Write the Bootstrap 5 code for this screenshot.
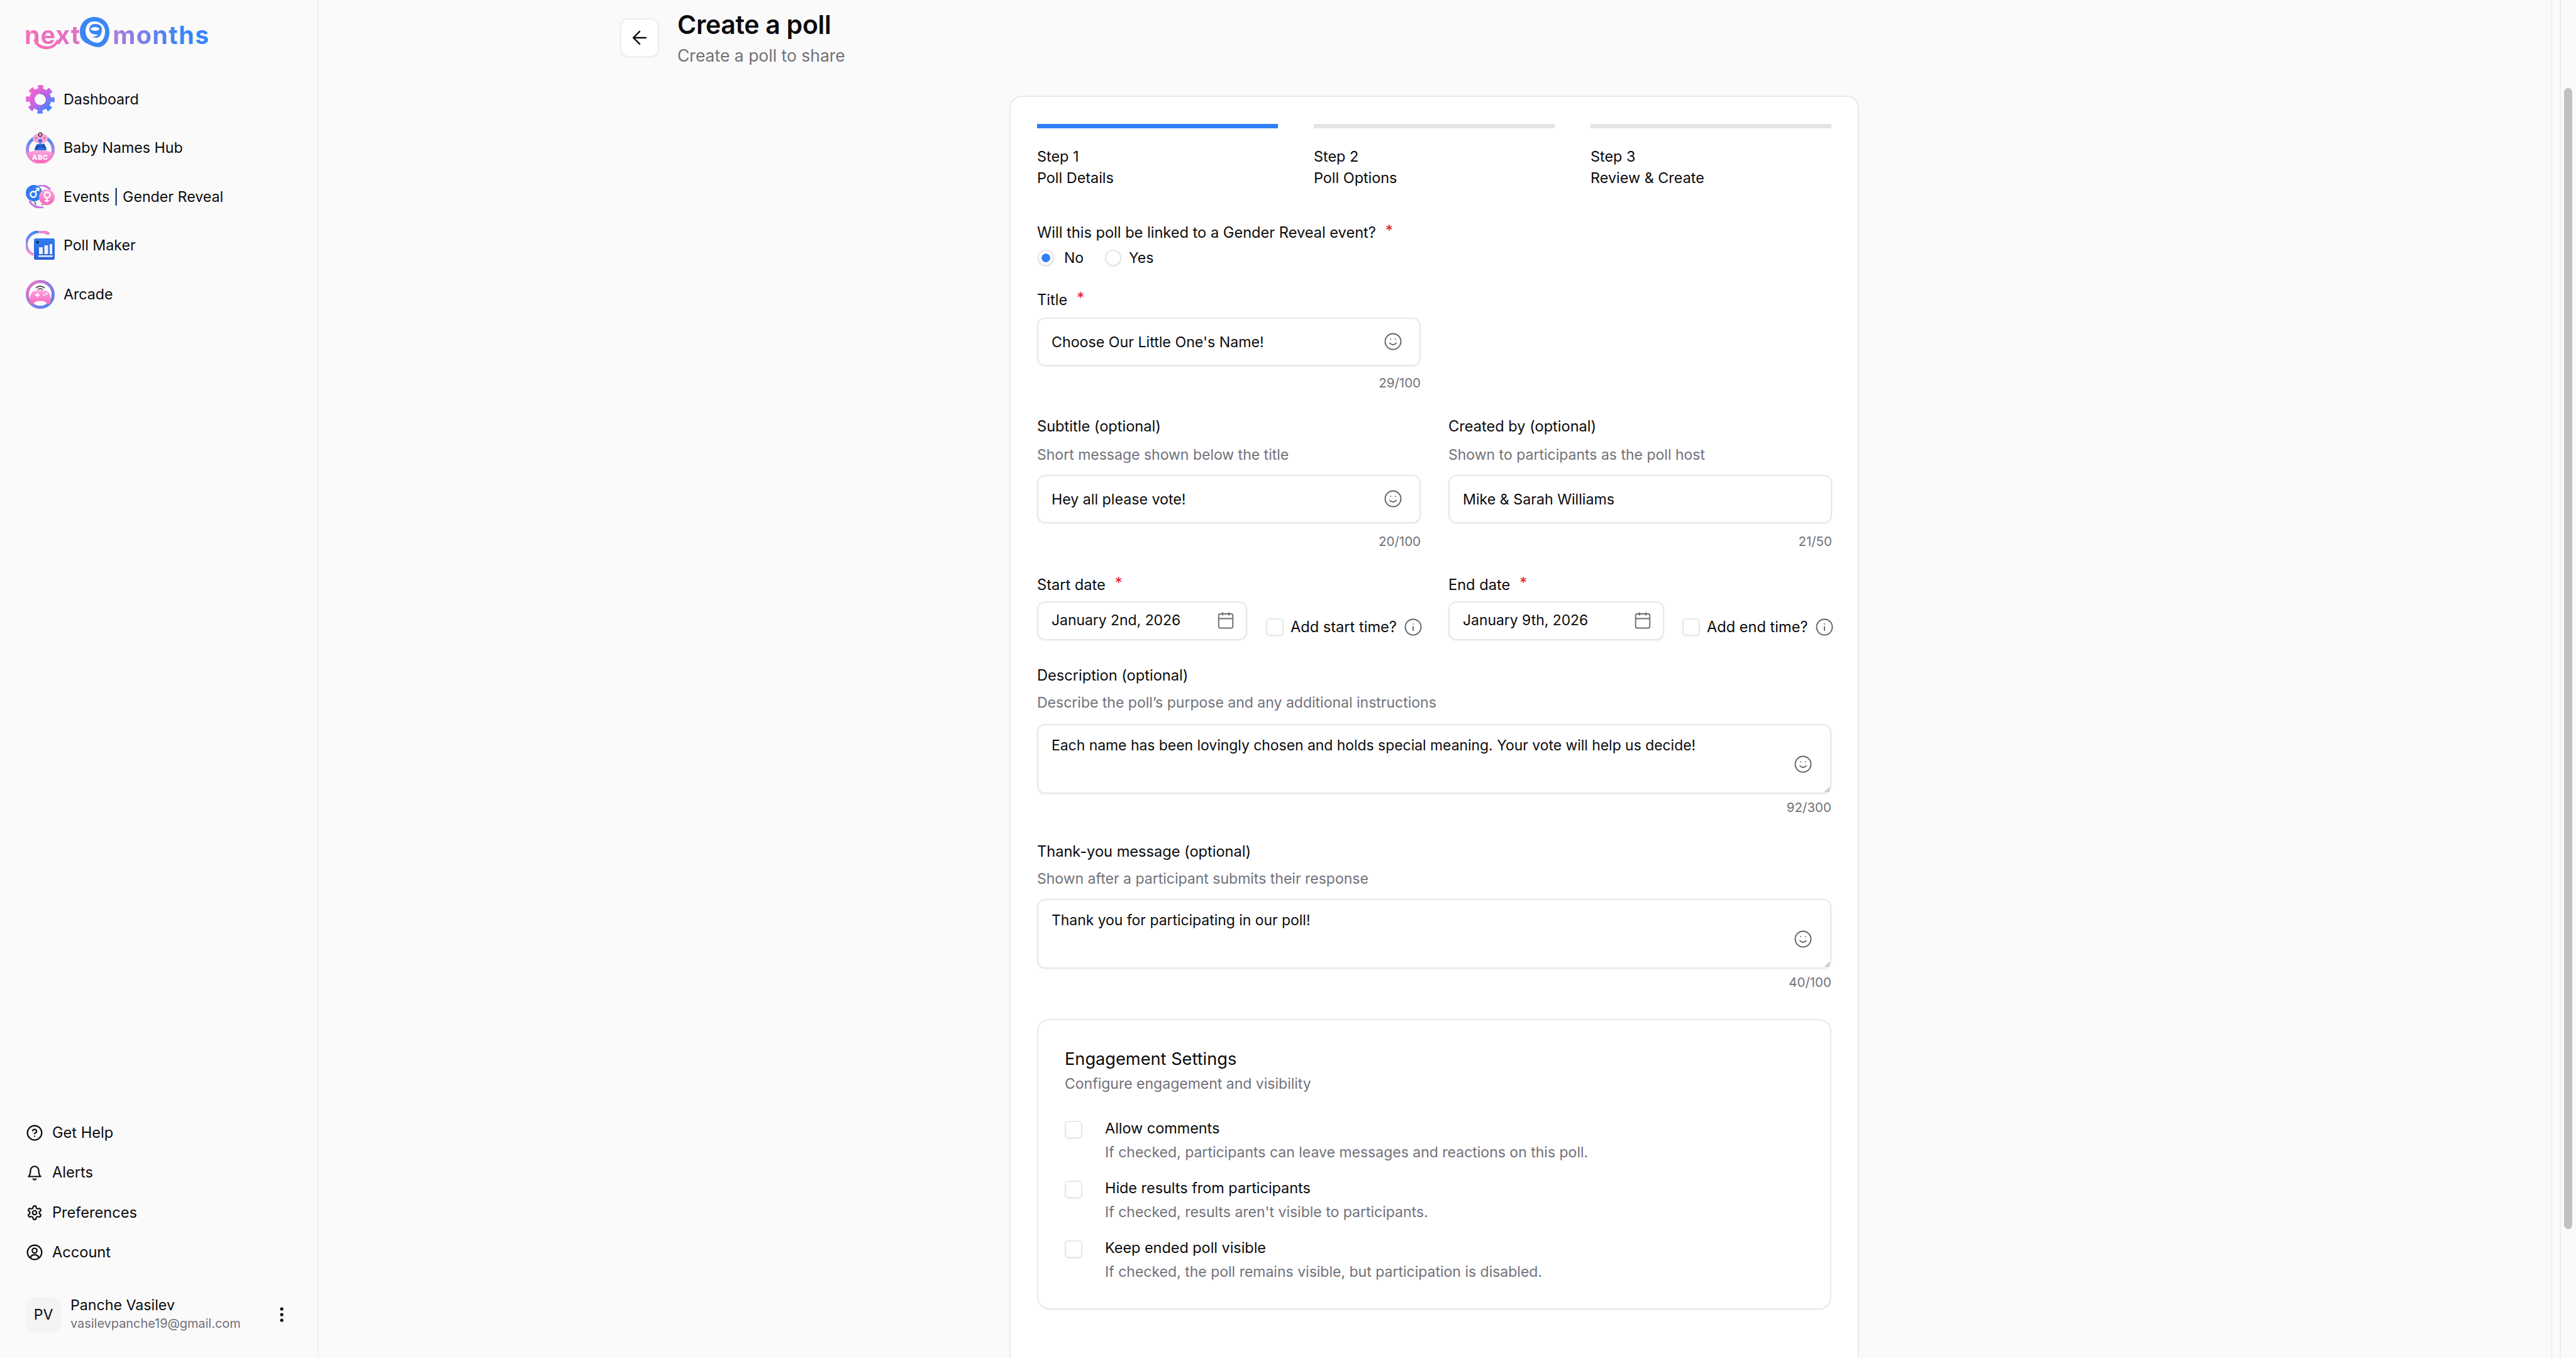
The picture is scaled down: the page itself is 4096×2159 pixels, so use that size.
<!DOCTYPE html>
<html lang="en"><head><meta charset="utf-8"><title>Create a poll</title>
<link href="https://cdn.jsdelivr.net/npm/bootstrap@5.3.0/dist/css/bootstrap.min.css" rel="stylesheet">
<style>
html,body{height:100%;overflow:hidden}
body{font-family:"Inter","Liberation Sans",sans-serif;font-size:23px;line-height:34px;color:#0b0b0d;background:#fafafa}
.shell{height:100vh}
.side{width:507px;flex:none;border-right:2px solid #efefef;padding-left:41px;padding-right:40px;padding-bottom:41px}
.logo{height:119px;padding-top:27px;position:relative}
.logo-row{height:50px;line-height:50px;font-size:39.5px;font-weight:700;letter-spacing:1px}
.logo-a{color:#ee6fbd;background:linear-gradient(90deg,#f56fbb,#dc72c6);-webkit-background-clip:text;background-clip:text;-webkit-text-fill-color:transparent;padding-top:4px;height:50px;margin-left:-2px;margin-right:-2px}
.logo-b{background:linear-gradient(90deg,#b079d8,#3686fa 70%);-webkit-background-clip:text;background-clip:text;-webkit-text-fill-color:transparent;padding-top:4px;height:50px;letter-spacing:1.4px}
.logo-tail{position:absolute;left:0;top:27px}
.nav-line{height:77.5px;gap:14px;color:#0b0b0d;text-decoration:none;font-size:23.2px}
.nav-ico{width:46px;flex:none}
.sub-line{height:63.5px;gap:15px;color:#0b0b0d;text-decoration:none;font-size:23.6px}
.sub-ico{width:26px;height:26px;flex:none;margin-left:1px}
.who{margin-top:38px;gap:15px}
.avatar{width:56px;height:56px;border-radius:13px;background:#f4f4f5;font-size:23px}
.who-name{font-size:23.2px;line-height:29px}
.who-mail{font-size:19.9px;line-height:28px;color:#71717a}
.kebab{margin-left:auto;margin-right:13px;width:8px}
.main-pane{min-width:0}
.page-head{padding-left:479px;padding-top:16px;gap:29px}
.back-btn{width:62px;height:62px;margin-top:13px;border:2px solid #ededed;border-radius:13px;background:#fff;padding:0;box-shadow:0 1px 2px rgba(0,0,0,.03)}
.page-title{font-size:41px;line-height:46px;font-weight:600;margin:0;letter-spacing:-.3px;color:#0b0b0d}
.page-sub{font-size:26.5px;line-height:36px;margin-top:8px;color:#71717a}
.poll-card{width:1351px;margin-left:1098px;margin-top:46px;background:#fff;border:2px solid #e9e9e9;border-radius:20px;padding:43px 42px 400px}
.bars{gap:57px}
.step-col{flex:1 1 0}
.bar{height:7px;background:#e4e4e7}
.bar-on{background:#2f7ff5}
.step-tx{margin-top:28px}
.step-tx div{line-height:34px;font-size:23.4px}
.fld-lab{line-height:34px;font-size:23.6px}
.req{color:#e3142d;margin-left:15px;position:relative;top:-3px}
.hint{line-height:34px;font-size:23px;color:#71717a}
.cnt{line-height:28px;font-size:20.5px;color:#71717a;text-align:right}
.m53{margin-top:53px}.m38{margin-top:38px}.m39{margin-top:39px}.m33{margin-top:33px}.m9{margin-top:9px}.m11{margin-top:11px}.m13{margin-top:13px}.m15{margin-top:15px}.m8{margin-top:8px}.m17{margin-top:17px}
.radios{height:34px;margin-top:6px;gap:0}
.rd{width:26px;height:26px;margin:0 0 0 1px;flex:none;border:2px solid #e6e6e6;background:#fff;box-shadow:0 1px 2px rgba(0,0,0,.08)}
.form-check-input.rd:checked{background-color:#fff;border-color:#e6e6e6;background-image:radial-gradient(circle,#2f7ff5 0 6.5px,transparent 7px)}
.rd-t1{margin-left:16px;width:64px}
.rd-t2{margin-left:12px}
.two{gap:44px}
.half{width:610px;flex:none}
.fbox{position:relative}
.tinput{height:77px;border:2px solid #e8e8e8;border-radius:13px;padding:0 60px 0 21px;font-size:23.2px;color:#0b0b0d;box-shadow:0 1px 3px rgba(0,0,0,.06)}
.tarea{height:111px;border:2px solid #e8e8e8;border-radius:13px;padding:15px 60px 0 21px;font-size:22.9px;line-height:34px;color:#0b0b0d;box-shadow:0 1px 3px rgba(0,0,0,.06)}
.smile{position:absolute;right:29px;top:23px;width:30px;height:30px}
.smile2{position:absolute;right:30px;top:49px;width:30px;height:30px}
.dbox{height:62px;border:2px solid #e8e8e8;border-radius:13px;padding:0 17px 2px 21px;font-size:22.9px;background:#fff;box-shadow:0 1px 3px rgba(0,0,0,.06)}
.dstart{width:334px}.dend{width:343px}
.chk{width:28px;height:28px;flex:none;margin:0;border:2px solid #e8e8e8;border-radius:6px;box-shadow:0 1px 2px rgba(0,0,0,.08)}
.timer{margin-top:27px;height:28px}
.timer-s{margin-left:30px}.timer-e{margin-left:29px}
.t-lab{margin-left:11px;font-size:23.6px;white-space:nowrap}
.t-info{margin-left:auto;width:30px;height:30px;margin-right:-3px}
.eng{margin-top:44px;border:2px solid #e9e9e9;border-radius:20px;padding:42px 42px 43px;box-shadow:0 1px 2px rgba(0,0,0,.03)}
.eng-t{font-size:27.2px;line-height:40px}
.eng-s{line-height:30px;margin-top:4px;font-size:23px;color:#71717a}
.eng-list{margin-top:41px}
.eng-row{gap:36px;margin-bottom:27px}
.eng-row:last-child{margin-bottom:0}
.eng-row .chk{margin-top:3px}
.eng-a{line-height:30px;font-size:23.4px}
.eng-b{line-height:30px;margin-top:8px;font-size:23px;color:#71717a}
.gutter{width:40px;flex:none;border-left:2px solid #f0f0f0}
.gut-a{width:14px;flex:none;border-right:2px solid #ededed}
.thumb{width:13px;height:1814px;margin:140px 0 0 5px;border-radius:7px;background:#c1c1c1}
.gfx-defs{position:absolute;width:0;height:0}
</style></head>
<body>
<svg class="gfx-defs"><defs>
<linearGradient id="gA" x1="0" y1="0" x2="1" y2="1"><stop offset="0" stop-color="#ff6fc4"/><stop offset=".5" stop-color="#b868e4"/><stop offset="1" stop-color="#2688fb"/></linearGradient>
<linearGradient id="gB" x1="0" y1="0" x2="0" y2="1"><stop offset="0" stop-color="#3c86f7"/><stop offset="1" stop-color="#fb8fd0"/></linearGradient>
<linearGradient id="gC" x1="0" y1="0" x2="1" y2="1"><stop offset="0" stop-color="#f275c6"/><stop offset="1" stop-color="#3b85f6"/></linearGradient>
<linearGradient id="gD" x1="0" y1="0" x2="0" y2="1"><stop offset="0" stop-color="#2e7cf2"/><stop offset="1" stop-color="#2a62d6"/></linearGradient>
<linearGradient id="gE" x1="0" y1="0" x2="0" y2="1"><stop offset="0" stop-color="#fda5dc"/><stop offset="1" stop-color="#f765bb"/></linearGradient>
<linearGradient id="gS" gradientUnits="userSpaceOnUse" x1="6" y1="6" x2="40" y2="40"><stop offset="0" stop-color="#ff62c8"/><stop offset=".5" stop-color="#c264e6"/><stop offset="1" stop-color="#2090ff"/></linearGradient>
</defs></svg>
<div class="shell d-flex">
<aside class="side d-flex flex-column">
  <div class="logo">
    <div class="logo-row d-flex align-items-start">
      <span class="logo-a">next</span>
      <svg width="49" height="48" viewBox="0 0 49 48" class="flex-none"><path d="M24 0c13 0 24 9 24 24 0 16-10 24-18 24-6 0-11-3-16-5C5 39 1 33 1 24 1 9 11 0 24 0z" fill="#3b86f6"/><path d="M24 7c10 0 17 7 17 16 0 11-6 18-12 18-7 0-19-6-19-18C10 13 15 7 24 7z" fill="#fff"/><path d="M25 11c7 0 11 3 11 8 0 8-3 14-9 14l-9-1c5 0 9-1 12-4-6 0-14-1-14-8 0-6 4-9 9-9z" fill="#3b86f6"/><ellipse cx="25" cy="19" rx="7" ry="3" fill="#fff"/></svg>
      <span class="logo-b ms-1">months</span>
    </div>
    <svg class="logo-tail" width="70" height="52" viewBox="0 0 70 52"><path d="M15 37c2 8 10 12 19 12 7 0 13-4 17-11" fill="none" stroke="#f56fbb" stroke-width="4.500" stroke-linecap="round"/></svg>
  </div>
  <a class="nav-line d-flex align-items-center" href="#"><svg class="nav-ico" height="46" viewBox="0 0 46 46"><circle cx="23" cy="23" r="19.5" fill="none" stroke="url(#gS)" stroke-width="6.5" stroke-dasharray="8.2 7.1" stroke-dashoffset="4"/><circle cx="23" cy="23" r="17.5" fill="url(#gS)"/><circle cx="23" cy="23" r="9" fill="#fafafa"/><path d="M23 13a10 10 0 0 1 10 10h-1a9 9 0 0 0-9-9z" fill="#7b3fd6"/></svg>Dashboard</a>
  <a class="nav-line d-flex align-items-center" href="#"><svg class="nav-ico" height="50" viewBox="0 0 46 50"><circle cx="23" cy="28" r="20.500" fill="none" stroke="url(#gB)" stroke-width="5"/><path d="M9 30c0-8 6-12 14-12s14 4 14 12z" fill="#fff"/><path d="M14 29c0-5 2-10 9-11 7 1 10 6 10 11z" fill="#2f6ddf"/><path d="M18 19l5 4 6-5 4 8-10-2-9 5z" fill="#1f4fb8"/><ellipse cx="23" cy="10" rx="12" ry="8" fill="#f8a5d9"/><circle cx="23" cy="14" r="3" fill="#2f74e8"/><circle cx="23" cy="4" r="2.800" fill="none" stroke="#222" stroke-width="1.200"/><path d="M15 10q1.500-2 3 0M28 10q1.500-2 3 0" fill="none" stroke="#333" stroke-width="1"/><path d="M3 33c7-5 33-5 40 0-2 10-10 16-20 16S5 43 3 33z" fill="url(#gE)"/><text x="23" y="44" text-anchor="middle" font-family="Inter,sans-serif" font-size="11" font-weight="800" fill="#fff" letter-spacing=".6">ABC</text></svg>Baby Names Hub</a>
  <a class="nav-line d-flex align-items-center" href="#"><svg class="nav-ico" height="37" viewBox="0 0 46 37"><path d="M20 1c8-1 14 1 19 6M6 25c3 8 12 12 22 11" fill="none" stroke="#c879dd" stroke-width="3.500"/><circle cx="13" cy="13" r="13" fill="#2f7bef"/><circle cx="12" cy="15" r="4.500" fill="none" stroke="#fff" stroke-width="2.500"/><path d="M15 11l5-5M16 5.500h4.500V10" fill="none" stroke="#fff" stroke-width="2.200"/><path d="M14 26l2 6M25 32l3-1" stroke="#334" stroke-width="1.200"/><circle cx="33.500" cy="19.500" r="12.500" fill="url(#gE)"/><circle cx="34" cy="16" r="4.500" fill="none" stroke="#fff" stroke-width="2.500"/><path d="M33.500 21v7M30 25h7" stroke="#fff" stroke-width="2.200"/></svg>Events | Gender Reveal</a>
  <a class="nav-line d-flex align-items-center" href="#"><svg class="nav-ico" height="46" viewBox="0 0 46 46"><path d="M37 5C28-1 13 0 6 8-3 19 0 32 12 38" fill="none" stroke="url(#gB)" stroke-width="4.500"/><path d="M37 5C31 1 24 1 20 1" fill="none" stroke="#ee85cf" stroke-width="4.500"/><rect x="13" y="12" width="33" height="34" rx="3" fill="url(#gD)"/><circle cx="18.500" cy="18" r="2" fill="#111"/><path d="M21 26h6v11h-6zM29.500 23h6v14h-6zM38 21h4v16h-4z" fill="#fff" opacity=".9"/><rect x="20" y="39" width="23" height="2.500" fill="#fff" opacity=".9"/></svg>Poll Maker</a>
  <a class="nav-line d-flex align-items-center" href="#"><svg class="nav-ico" height="46" viewBox="0 0 46 46"><circle cx="23" cy="23" r="20.500" fill="#fff" stroke="url(#gC)" stroke-width="5"/><path d="M12 18c4-2 18-2 22 0 5 2 7 15 5 19-2 3-5 1-8-2-2-2-14-2-16 0-3 3-6 5-8 2-2-4 0-17 5-19z" fill="url(#gE)"/><path d="M15 24h7M18.500 20.500v7" stroke="#fff" stroke-width="2"/><circle cx="29" cy="24" r="1.500" fill="#fff"/><circle cx="33" cy="22" r="1.500" fill="#fff"/><path d="M16 13c4-4 10-4 14 0M19 15.500c2-2 6-2 8 0" fill="none" stroke="#222" stroke-width="1.300"/></svg>Arcade</a>
  <div class="mt-auto">
    <a class="sub-line d-flex align-items-center" href="#"><svg class="sub-ico" viewBox="0 0 24 24" fill="none" stroke="#0b0b0d" stroke-width="2" stroke-linecap="round" stroke-linejoin="round"><circle cx="12" cy="12" r="10.500"/><path d="M9.090 9a3 3 0 0 1 5.830 1c0 2-3 3-3 3M12 17h.01"/></svg>Get Help</a>
    <a class="sub-line d-flex align-items-center" href="#"><svg class="sub-ico" viewBox="0 0 24 24" fill="none" stroke="#0b0b0d" stroke-width="2" stroke-linecap="round" stroke-linejoin="round"><path d="M6 9a6 6 0 0 1 12 0c0 7 3 9 3 9H3s3-2 3-9M10 21.500a2.200 2.200 0 0 0 4 0"/></svg>Alerts</a>
    <a class="sub-line d-flex align-items-center" href="#"><svg class="sub-ico" viewBox="0 0 24 24" fill="none" stroke="#0b0b0d" stroke-width="2" stroke-linecap="round" stroke-linejoin="round"><path d="M12.220 2h-.44a2 2 0 0 0-2 2v.18a2 2 0 0 1-1 1.730l-.43.25a2 2 0 0 1-2 0l-.15-.08a2 2 0 0 0-2.730.73l-.22.38a2 2 0 0 0 .73 2.730l.15.1a2 2 0 0 1 1 1.720v.51a2 2 0 0 1-1 1.740l-.15.09a2 2 0 0 0-.73 2.730l.22.38a2 2 0 0 0 2.730.73l.15-.08a2 2 0 0 1 2 0l.43.25a2 2 0 0 1 1 1.730V20a2 2 0 0 0 2 2h.44a2 2 0 0 0 2-2v-.18a2 2 0 0 1 1-1.730l.43-.25a2 2 0 0 1 2 0l.15.08a2 2 0 0 0 2.730-.73l.22-.39a2 2 0 0 0-.73-2.730l-.15-.08a2 2 0 0 1-1-1.740v-.5a2 2 0 0 1 1-1.740l.15-.09a2 2 0 0 0 .73-2.730l-.22-.38a2 2 0 0 0-2.730-.73l-.15.08a2 2 0 0 1-2 0l-.43-.25a2 2 0 0 1-1-1.730V4a2 2 0 0 0-2-2z"/><circle cx="12" cy="12" r="3"/></svg>Preferences</a>
    <a class="sub-line d-flex align-items-center" href="#"><svg class="sub-ico" viewBox="0 0 24 24" fill="none" stroke="#0b0b0d" stroke-width="2" stroke-linecap="round" stroke-linejoin="round"><circle cx="12" cy="12" r="10.500"/><circle cx="12" cy="9.500" r="3.500"/><path d="M6 19.500c1-3 3.500-4 6-4s5 1 6 4"/></svg>Account</a>
    <div class="who d-flex align-items-center">
      <div class="avatar d-flex align-items-center justify-content-center flex-none">PV</div>
      <div><div class="who-name">Panche Vasilev</div><div class="who-mail">vasilevpanche19@gmail.com</div></div>
      <svg class="kebab" height="26" viewBox="0 0 8 26"><circle cx="4" cy="4" r="2.600" fill="#0b0b0d"/><circle cx="4" cy="13" r="2.600" fill="#0b0b0d"/><circle cx="4" cy="22" r="2.600" fill="#0b0b0d"/></svg>
    </div>
  </div>
</aside>
<main class="main-pane flex-grow-1">
  <header class="page-head d-flex align-items-start">
    <button class="back-btn d-flex align-items-center justify-content-center" type="button" aria-label="Back"><svg width="34" height="34" viewBox="0 0 24 24" fill="none" stroke="#0b0b0d" stroke-width="1.700" stroke-linecap="round" stroke-linejoin="round"><path d="M19 12H5M12 19l-7-7 7-7"/></svg></button>
    <div><h1 class="page-title">Create a poll</h1><div class="page-sub">Create a poll to share</div></div>
  </header>
  <form class="poll-card">
    <div class="bars d-flex">
      <div class="step-col"><div class="bar bar-on"></div><div class="step-tx"><div class="st-a">Step 1</div><div>Poll Details</div></div></div>
      <div class="step-col"><div class="bar"></div><div class="step-tx"><div class="st-a">Step 2</div><div>Poll Options</div></div></div>
      <div class="step-col"><div class="bar"></div><div class="step-tx"><div class="st-a">Step 3</div><div>Review &amp; Create</div></div></div>
    </div>
    <div class="fld-lab m53">Will this poll be linked to a Gender Reveal event?<span class="req">*</span></div>
    <div class="radios d-flex align-items-center">
      <input class="form-check-input rd" type="radio" name="lnk" checked aria-label="No"><span class="rd-t1">No</span>
      <input class="form-check-input rd" type="radio" name="lnk" aria-label="Yes"><span class="rd-t2">Yes</span>
    </div>
    <div class="fld-lab m33">Title<span class="req">*</span></div>
    <div class="half fbox m11"><input class="form-control tinput" value="Choose Our Little One's Name!"><svg class="smile" viewBox="0 0 24 24" fill="none" stroke="#5f6168" stroke-width="1.500" stroke-linecap="round"><circle cx="12" cy="12" r="10"/><path d="M8 14s1.500 2 4 2 4-2 4-2M9 9h.01M15 9h.01"/></svg></div>
    <div class="half cnt m13">29/100</div>
    <div class="two d-flex m38">
      <div class="half">
        <div class="fld-lab">Subtitle (optional)</div><div class="hint m11">Short message shown below the title</div>
        <div class="fbox m15"><input class="form-control tinput" value="Hey all please vote!"><svg class="smile" viewBox="0 0 24 24" fill="none" stroke="#5f6168" stroke-width="1.500" stroke-linecap="round"><circle cx="12" cy="12" r="10"/><path d="M8 14s1.500 2 4 2 4-2 4-2M9 9h.01M15 9h.01"/></svg></div>
        <div class="cnt m15">20/100</div>
      </div>
      <div class="half">
        <div class="fld-lab">Created by (optional)</div><div class="hint m11">Shown to participants as the poll host</div>
        <div class="fbox m15"><input class="form-control tinput" value="Mike &amp; Sarah Williams"></div>
        <div class="cnt m15">21/50</div>
      </div>
    </div>
    <div class="two d-flex m38">
      <div class="half">
        <div class="fld-lab">Start date<span class="req">*</span></div>
        <div class="d-flex align-items-start m9">
          <div class="dbox dstart d-flex align-items-center justify-content-between">January 2nd, 2026<svg width="30" height="30" viewBox="0 0 24 24" fill="none" stroke="#6b6d74" stroke-width="1.500"><rect x="3" y="4" width="18" height="18" rx="2"/><path d="M16 2v4M8 2v4M3 10h18"/></svg></div>
          <div class="timer timer-s d-flex align-items-center flex-grow-1"><input class="form-check-input chk" type="checkbox" aria-label="Add start time?"><span class="t-lab">Add start time?</span><svg class="t-info" viewBox="0 0 24 24" fill="none" stroke="#5f6168" stroke-width="1.500" stroke-linecap="round"><circle cx="12" cy="12" r="10"/><path d="M12 16v-4.500M12 8h.01"/></svg></div>
        </div>
      </div>
      <div class="half">
        <div class="fld-lab">End date<span class="req">*</span></div>
        <div class="d-flex align-items-start m9">
          <div class="dbox dend d-flex align-items-center justify-content-between">January 9th, 2026<svg width="30" height="30" viewBox="0 0 24 24" fill="none" stroke="#6b6d74" stroke-width="1.500"><rect x="3" y="4" width="18" height="18" rx="2"/><path d="M16 2v4M8 2v4M3 10h18"/></svg></div>
          <div class="timer timer-e d-flex align-items-center flex-grow-1"><input class="form-check-input chk" type="checkbox" aria-label="Add end time?"><span class="t-lab">Add end time?</span><svg class="t-info" viewBox="0 0 24 24" fill="none" stroke="#5f6168" stroke-width="1.500" stroke-linecap="round"><circle cx="12" cy="12" r="10"/><path d="M12 16v-4.500M12 8h.01"/></svg></div>
        </div>
      </div>
    </div>
    <div class="fld-lab m39">Description (optional)</div><div class="hint m9">Describe the poll’s purpose and any additional instructions</div>
    <div class="fbox m17"><textarea class="form-control tarea">Each name has been lovingly chosen and holds special meaning. Your vote will help us decide!</textarea><svg class="smile2" viewBox="0 0 24 24" fill="none" stroke="#5f6168" stroke-width="1.500" stroke-linecap="round"><circle cx="12" cy="12" r="10"/><path d="M8 14s1.500 2 4 2 4-2 4-2M9 9h.01M15 9h.01"/></svg></div>
    <div class="cnt m8">92/300</div>
    <div class="fld-lab m39">Thank-you message (optional)</div><div class="hint m9">Shown after a participant submits their response</div>
    <div class="fbox m15"><textarea class="form-control tarea">Thank you for participating in our poll!</textarea><svg class="smile2" viewBox="0 0 24 24" fill="none" stroke="#5f6168" stroke-width="1.500" stroke-linecap="round"><circle cx="12" cy="12" r="10"/><path d="M8 14s1.500 2 4 2 4-2 4-2M9 9h.01M15 9h.01"/></svg></div>
    <div class="cnt m8">40/100</div>
    <section class="eng">
      <div class="eng-t">Engagement Settings</div>
      <div class="eng-s">Configure engagement and visibility</div>
      <div class="eng-list">
        <div class="eng-row d-flex align-items-start"><input class="form-check-input chk" type="checkbox" aria-label="Allow comments"><div><div class="eng-a">Allow comments</div><div class="eng-b">If checked, participants can leave messages and reactions on this poll.</div></div></div>
        <div class="eng-row d-flex align-items-start"><input class="form-check-input chk" type="checkbox" aria-label="Hide results from participants"><div><div class="eng-a">Hide results from participants</div><div class="eng-b">If checked, results aren't visible to participants.</div></div></div>
        <div class="eng-row d-flex align-items-start"><input class="form-check-input chk" type="checkbox" aria-label="Keep ended poll visible"><div><div class="eng-a">Keep ended poll visible</div><div class="eng-b">If checked, the poll remains visible, but participation is disabled.</div></div></div>
      </div>
    </section>
  </form>
</main>
<div class="gutter d-flex"><div class="gut-a"></div><div class="thumb"></div></div>
</div>
<script src="https://cdn.jsdelivr.net/npm/bootstrap@5.3.0/dist/js/bootstrap.bundle.min.js"></script>
</body></html>
